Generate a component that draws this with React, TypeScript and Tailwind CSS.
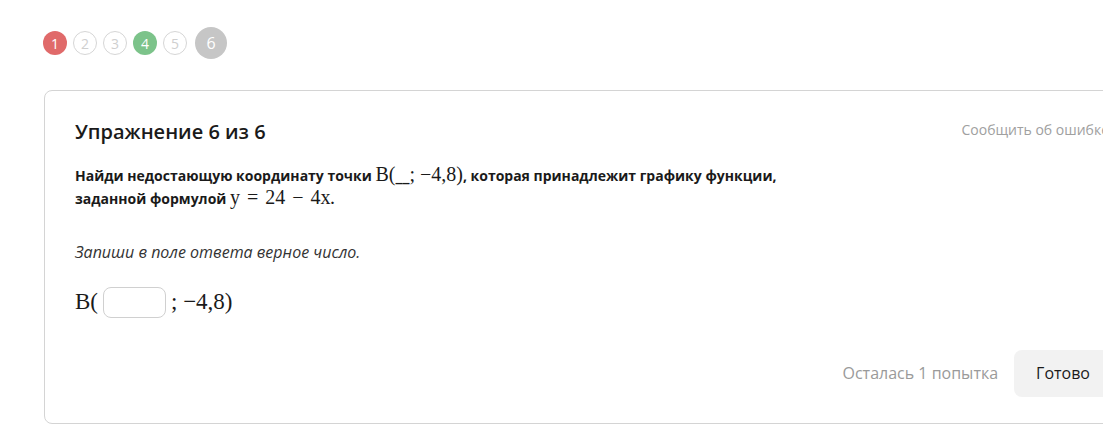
import React from "react";

const steps = [
  { n: 1, kind: "wrong" },
  { n: 2, kind: "empty" },
  { n: 3, kind: "empty" },
  { n: 4, kind: "right" },
  { n: 5, kind: "empty" },
];

const Steps = () => (
  <div className="flex items-center gap-[6px] pl-[43px] pt-[27px]">
    {steps.map((s) => (
      <div
        key={s.n}
        className={
          s.kind === "wrong"
            ? "w-[24px] h-[24px] rounded-full bg-[#e06a6a] text-white flex items-center justify-center text-[14px]"
            : s.kind === "right"
            ? "w-[24px] h-[24px] rounded-full bg-[#7cc38a] text-white flex items-center justify-center text-[14px]"
            : "w-[24px] h-[24px] rounded-full border border-[#d6d6d6] text-[#cfcfcf] flex items-center justify-center text-[14px]"
        }
      >
        {s.n}
      </div>
    ))}
    <div className="ml-[2px] w-[32px] h-[32px] rounded-full bg-[#c6c6c6] text-white flex items-center justify-center text-[16px]">
      6
    </div>
  </div>
);

const serif = "font-['Liberation_Serif','DejaVu_Serif',serif] font-normal";

export default function App() {
  return (
    <div className="w-[1103px] h-[431px] overflow-hidden bg-white font-['Open_Sans','Noto_Sans',sans-serif] text-[#1a1a1a]">
      <Steps />
      <div className="ml-[44px] mt-[31px] w-[1099px] rounded-[8px] border border-[#d4d4d4] pl-[30px] pr-[30px] pt-[27px] pb-[26px]">
        <div className="flex items-start justify-between">
          <h1 className="text-[20px] font-semibold leading-[28px]">Упражнение 6 из 6</h1>
          <span className="text-[14px] text-[#a0a0a0] mt-[1px] mr-[3px]">Сообщить об ошибке</span>
        </div>
        <p className="mt-[18px] text-[14px] font-bold leading-[23px]">
          Найди недостающую координату точки{" "}
          <span className={`${serif} text-[20px] leading-[20px]`}>
            B(<span className="font-['DejaVu_Sans',sans-serif] font-bold text-[14px]">__</span>; −4,8)
          </span>
          , которая принадлежит графику функции,
          <br />
          заданной формулой{" "}
          <span className={`${serif} text-[20px] leading-[20px]`}>
            y <span className="mx-[2px]">=</span> 24 <span className="mx-[2px]">−</span> 4x
          </span>
          .
        </p>
        <p className="mt-[30px] text-[16px] italic text-[#333]">Запиши в поле ответа верное число.</p>
        <div className={`mt-[21px] flex items-center ${serif} text-[23px]`}>
          <span>B(</span>
          <div className="mx-[5px] w-[63px] h-[31px] rounded-[8px] border border-[#d0d0d0] bg-white" />
          <span>; −4,8)</span>
        </div>
        <div className="mt-[30px] flex items-center justify-end gap-[16px]">
          <span className="text-[16px] text-[#9a9a9a]">Осталась 1 попытка</span>
          <button className="h-[47px] px-[22px] rounded-[8px] bg-[#f2f2f2] text-[16px] text-[#1a1a1a]">Готово</button>
        </div>
      </div>
    </div>
  );
}
